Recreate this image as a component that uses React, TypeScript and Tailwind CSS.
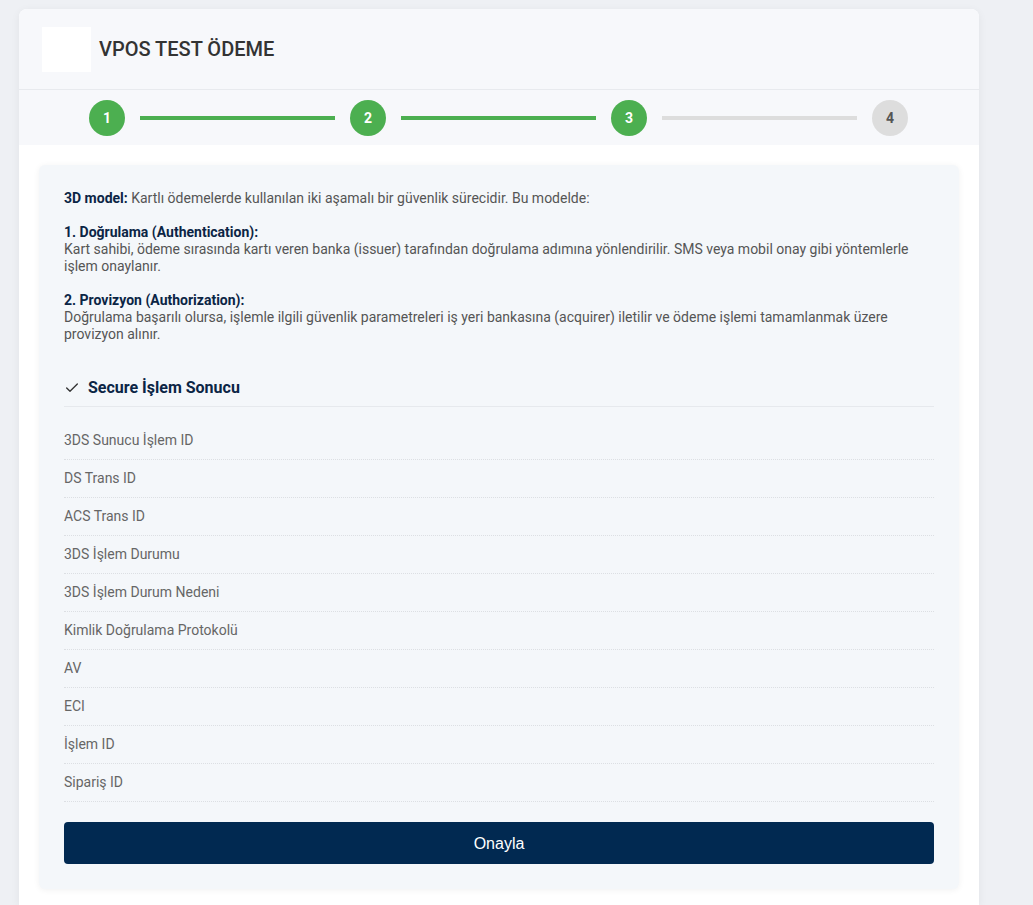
import { Check } from "lucide-react";

const steps = [
  { n: 1, done: true },
  { n: 2, done: true },
  { n: 3, done: true },
  { n: 4, done: false },
];

const rows = [
  "3DS Sunucu İşlem ID",
  "DS Trans ID",
  "ACS Trans ID",
  "3DS İşlem Durumu",
  "3DS İşlem Durum Nedeni",
  "Kimlik Doğrulama Protokolü",
  "AV",
  "ECI",
  "İşlem ID",
  "Sipariş ID",
];

function Stepper() {
  return (
    <div className="flex items-center gap-[15px] pl-[70px] pr-[71px] pt-[10px] pb-[9px]">
      {steps.map((s, i) => (
        <div key={s.n} className={`flex items-center gap-[15px] ${i < steps.length - 1 ? "flex-1" : ""}`}>
          <div
            className={`w-9 h-9 rounded-full flex items-center justify-center text-[14px] font-bold shrink-0 ${
              s.done ? "bg-[#4caf50] text-white" : "bg-[#dddddd] text-[#555555]"
            }`}
          >
            {s.n}
          </div>
          {i < steps.length - 1 && (
            <div className={`flex-1 h-[4px] ${steps[i + 1].done ? "bg-[#4caf50]" : "bg-[#dddddd]"}`} />
          )}
        </div>
      ))}
    </div>
  );
}

export default function App() {
  return (
    <div className="min-h-screen bg-[#eef0f4] pt-[9px] pl-[19px] font-['Roboto',sans-serif]">
      <div className="w-[960px] bg-white rounded-t-[8px] shadow-[0_2px_10px_rgba(0,0,0,0.06)] overflow-hidden">
        <div className="bg-[#f7f8fb]">
          <div className="h-[81px] flex items-center px-[23px] gap-[8px] border-b border-[#e8eaee]">
            <div className="w-[49px] h-[45px] bg-white" />
            <h1 className="text-[20px] text-[#333333] font-medium">VPOS TEST ÖDEME</h1>
          </div>
          <Stepper />
        </div>

        <div className="px-[20px] pt-[20px] pb-[16px]">
          <div className="bg-[#f4f7fa] rounded-[6px] p-[25px] shadow-[0_1px_6px_rgba(0,0,0,0.06)] text-[14px] leading-[17px] text-[#555555]">
            <p>
              <b className="text-[#0b2545]">3D model:</b> Kartlı ödemelerde kullanılan iki aşamalı bir güvenlik sürecidir. Bu modelde:
            </p>
            <br />
            <p>
              <b className="text-[#0b2545]">1. Doğrulama (Authentication):</b>
              <br />
              Kart sahibi, ödeme sırasında kartı veren banka (issuer) tarafından doğrulama adımına yönlendirilir. SMS veya mobil onay gibi yöntemlerle işlem onaylanır.
            </p>
            <br />
            <p>
              <b className="text-[#0b2545]">2. Provizyon (Authorization):</b>
              <br />
              Doğrulama başarılı olursa, işlemle ilgili güvenlik parametreleri iş yeri bankasına (acquirer) iletilir ve ödeme işlemi tamamlanmak üzere provizyon alınır.
            </p>

            <div className="mt-[33px] mb-[15px] pb-[6px] border-b border-[#e6e9ed] flex items-center gap-[8px]">
              <Check className="w-[16px] h-[16px] text-[#333333]" strokeWidth={2} />
              <h2 className="text-[16px] leading-[24px] font-bold text-[#0b2545]">Secure İşlem Sonucu</h2>
            </div>

            <div>
              {rows.map((r) => (
                <div key={r} className="py-[10px] border-b border-dotted border-[#dcdfe3] text-[#666666]">
                  {r}
                </div>
              ))}
            </div>

            <button className="mt-[20px] w-full h-[42px] rounded-[4px] bg-[#012951] text-white text-[16px] font-['Liberation_Sans',Arial,sans-serif]">
              Onayla
            </button>
          </div>
        </div>
      </div>
    </div>
  );
}
